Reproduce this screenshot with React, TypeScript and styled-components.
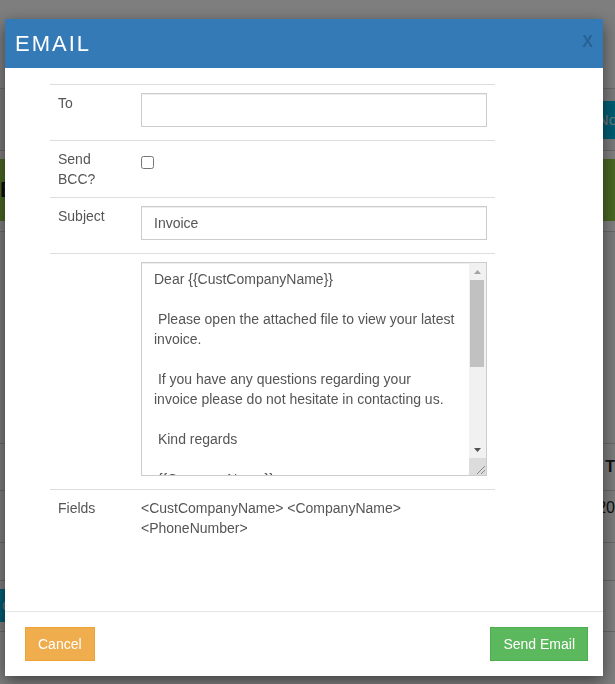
import React from "react";
import styled, { createGlobalStyle } from "styled-components";

const GlobalStyle = createGlobalStyle`
  html, body { margin: 0; padding: 0; }
  body {
    font-family: "Liberation Sans", Arial, Helvetica, sans-serif;
    font-size: 14px;
    line-height: 20px;
    color: #333;
    background: #fff;
  }
  * { box-sizing: border-box; }
`;

/* ---------- background page (behind the overlay) ---------- */
const Page = styled.div`
  min-height: 684px;
  background: #fff;
  display: flex;
  flex-direction: column;
  overflow: hidden;
`;

const TopNav = styled.div`
  height: 89px;
  background: #fdfdfd;
  border-bottom: 1px solid #d2d2d2;
`;

const Toolbar = styled.div`
  height: 62px;
  background: #f4f4f4;
  border-bottom: 1px solid #d2d2d2;
  display: flex;
  justify-content: flex-end;
  align-items: center;
  overflow: hidden;
`;

const BgButton = styled.div<{ $edge: "left" | "right" }>`
  flex-shrink: 0;
  height: ${(p) => (p.$edge === "right" ? "38px" : "33px")};
  padding: 0 12px;
  display: flex;
  align-items: center;
  font-size: 15px;
  color: #e6e6e6;
  background: #00b8e6;
  margin-right: ${(p) => (p.$edge === "right" ? "-34px" : "0")};
  margin-left: ${(p) => (p.$edge === "left" ? "-10px" : "0")};
`;

const GreenBar = styled.div`
  margin-top: 8px;
  height: 62px;
  background: #93cf47;
  display: flex;
  align-items: center;
  font-size: 22px;
  font-weight: bold;
  color: #1b1b1b;
`;

const BgSection = styled.div`
  margin-top: 10px;
  height: 213px;
  border-top: 1px solid #d2d2d2;
  border-bottom: 1px solid #d2d2d2;
  background: #f7f7f7;
`;

const BgRow = styled.div<{ $h: number; $bold?: boolean; $top?: number }>`
  height: ${(p) => p.$h}px;
  border-bottom: 1px solid #d2d2d2;
  display: flex;
  justify-content: flex-end;
  align-items: ${(p) => (p.$top ? "flex-start" : "center")};
  padding-top: ${(p) => p.$top ?? 0}px;
  font-size: 16px;
  font-weight: ${(p) => (p.$bold ? "bold" : "normal")};
  color: #222;
  background: #f9f9f9;
`;

const BgFooter = styled.div`
  height: 51px;
  padding-top: 8px;
  display: flex;
  align-items: flex-start;
  border-bottom: 1px solid #d2d2d2;
  overflow: hidden;
`;

/* ---------- overlay + modal ---------- */
const Overlay = styled.div`
  position: fixed;
  inset: 0;
  background: rgba(0, 0, 0, 0.5);
`;

const Modal = styled.div`
  position: fixed;
  left: 5px;
  top: 19px;
  width: 598px;
  background: #fff;
  box-shadow: 0 5px 15px rgba(0, 0, 0, 0.5);
  display: flex;
  flex-direction: column;
`;

const Header = styled.div`
  height: 49px;
  background: #337ab7;
  display: flex;
  align-items: center;
  justify-content: space-between;
  padding: 1px 10px 0 10px;
`;

const Title = styled.h4`
  margin: 0;
  font-size: 22px;
  line-height: 24px;
  font-weight: normal;
  letter-spacing: 2px;
  color: #fff;
`;

const Close = styled.button`
  align-self: flex-start;
  margin-top: 12px;
  padding: 0;
  border: 0;
  background: transparent;
  font-family: inherit;
  font-size: 16px;
  line-height: 20px;
  font-weight: bold;
  color: #000;
  opacity: 0.2;
  cursor: pointer;
`;

const Body = styled.div`
  padding: 16px 0 65px 45px;
`;

const FormTable = styled.div`
  width: 445px;
  display: flex;
  flex-direction: column;
`;

const Row = styled.div`
  display: grid;
  grid-template-columns: 83px 1fr;
  border-top: 1px solid #ddd;
`;

const Label = styled.div`
  padding: 8px;
  color: #555;
  font-size: 14px;
  line-height: 20px;
`;

const Cell = styled.div`
  padding: 8px;
  color: #555;
  font-size: 14px;
  line-height: 20px;
`;

const TextInput = styled.input`
  display: block;
  width: 346px;
  height: 34px;
  margin: 0 0 5px;
  padding: 6px 12px;
  border: 1px solid #ccc;
  border-radius: 0;
  box-shadow: inset 0 1px 1px rgba(0, 0, 0, 0.075);
  font-family: inherit;
  font-size: 14px;
  line-height: 20px;
  color: #555;
  background: #fff;
  outline: none;
`;

const Check = styled.input`
  display: block;
  width: 13px;
  height: 13px;
  margin: 7px 0 0;
`;

const AreaWrap = styled.div`
  position: relative;
  width: 346px;
  height: 214px;
  margin: 0 0 5px;
`;

const MessageArea = styled.textarea`
  display: block;
  width: 100%;
  height: 100%;
  margin: 0;
  padding: 6px 29px 6px 12px;
  border: 1px solid #ccc;
  border-radius: 0;
  box-shadow: inset 0 1px 1px rgba(0, 0, 0, 0.075);
  font-family: inherit;
  font-size: 14px;
  line-height: 20px;
  color: #555;
  background: #fff;
  resize: none;
  outline: none;
  overflow: hidden;
`;

/* fake classic scrollbar drawn over the textarea's right edge */
const ScrollRail = styled.div`
  position: absolute;
  top: 1px;
  right: 1px;
  bottom: 1px;
  width: 17px;
  background: #f1f1f1;
  display: flex;
  flex-direction: column;
`;

const ArrowBox = styled.div`
  height: 17px;
  flex-shrink: 0;
  display: flex;
  align-items: center;
  justify-content: center;
`;

const Track = styled.div`
  flex: 1;
  padding: 0 2px 0 1px;
`;

const Thumb = styled.div`
  height: 87px;
  background: #c1c1c1;
`;

const Corner = styled.div`
  height: 17px;
  flex-shrink: 0;
  background: #dcdcdc;
  display: flex;
  align-items: flex-end;
  justify-content: flex-end;
`;

const FieldsText = styled.div`
  color: #555;
`;

const Footer = styled.div`
  border-top: 1px solid #e5e5e5;
  padding: 15px 15px 15px 20px;
  display: flex;
  justify-content: space-between;
  align-items: center;
`;

const ActionButton = styled.button<{ $variant: "warning" | "success" }>`
  height: 34px;
  padding: 6px 12px;
  border-radius: 0;
  font-family: inherit;
  font-size: 14px;
  line-height: 20px;
  color: #fff;
  cursor: pointer;
  background: ${(p) => (p.$variant === "warning" ? "#f0ad4e" : "#5cb85c")};
  border: 1px solid ${(p) => (p.$variant === "warning" ? "#eea236" : "#4cae4c")};
`;

const message =
  "Dear {{CustCompanyName}}\n\n Please open the attached file to view your latest invoice.\n\n If you have any questions regarding your invoice please do not hesitate in contacting us.\n\n Kind regards\n\n {{CompanyName}}\n {{PhoneNumber}}\n\n\n\n\n\n\n";

export default function App() {
  return (
    <>
      <GlobalStyle />
      <Page>
        <TopNav />
        <Toolbar>
          <BgButton $edge="right">Notes</BgButton>
        </Toolbar>
        <GreenBar>E</GreenBar>
        <BgSection />
        <BgRow $h={47} $bold>
          T
        </BgRow>
        <BgRow $h={52} $top={7}>
          20
        </BgRow>
        <BgRow $h={38} />
        <BgFooter>
          <BgButton $edge="left">Ca</BgButton>
        </BgFooter>
      </Page>
      <Overlay />
      <Modal>
        <Header>
          <Title>EMAIL</Title>
          <Close type="button">X</Close>
        </Header>
        <Body>
          <FormTable>
            <Row>
              <Label>To</Label>
              <Cell>
                <TextInput type="text" defaultValue="" />
              </Cell>
            </Row>
            <Row>
              <Label>Send BCC?</Label>
              <Cell>
                <Check type="checkbox" />
              </Cell>
            </Row>
            <Row>
              <Label>Subject</Label>
              <Cell>
                <TextInput type="text" defaultValue="Invoice" />
              </Cell>
            </Row>
            <Row>
              <Label />
              <Cell>
                <AreaWrap>
                  <MessageArea defaultValue={message} />
                  <ScrollRail>
                    <ArrowBox>
                      <svg width="7" height="4" viewBox="0 0 7 4">
                        <polygon points="3.5,0 7,4 0,4" fill="#a3a3a3" />
                      </svg>
                    </ArrowBox>
                    <Track>
                      <Thumb />
                    </Track>
                    <ArrowBox>
                      <svg width="7" height="4" viewBox="0 0 7 4">
                        <polygon points="0,0 7,0 3.5,4" fill="#505050" />
                      </svg>
                    </ArrowBox>
                    <Corner>
                      <svg width="11" height="11" viewBox="0 0 11 11">
                        <line x1="2" y1="10" x2="10" y2="2" stroke="#8a8a8a" strokeWidth="1" />
                        <line x1="6" y1="10" x2="10" y2="6" stroke="#8a8a8a" strokeWidth="1" />
                      </svg>
                    </Corner>
                  </ScrollRail>
                </AreaWrap>
              </Cell>
            </Row>
            <Row>
              <Label>Fields</Label>
              <Cell>
                <FieldsText>
                  &lt;CustCompanyName&gt; &lt;CompanyName&gt; &lt;PhoneNumber&gt;
                </FieldsText>
              </Cell>
            </Row>
          </FormTable>
        </Body>
        <Footer>
          <ActionButton $variant="warning" type="button">
            Cancel
          </ActionButton>
          <ActionButton $variant="success" type="button">
            Send Email
          </ActionButton>
        </Footer>
      </Modal>
    </>
  );
}
